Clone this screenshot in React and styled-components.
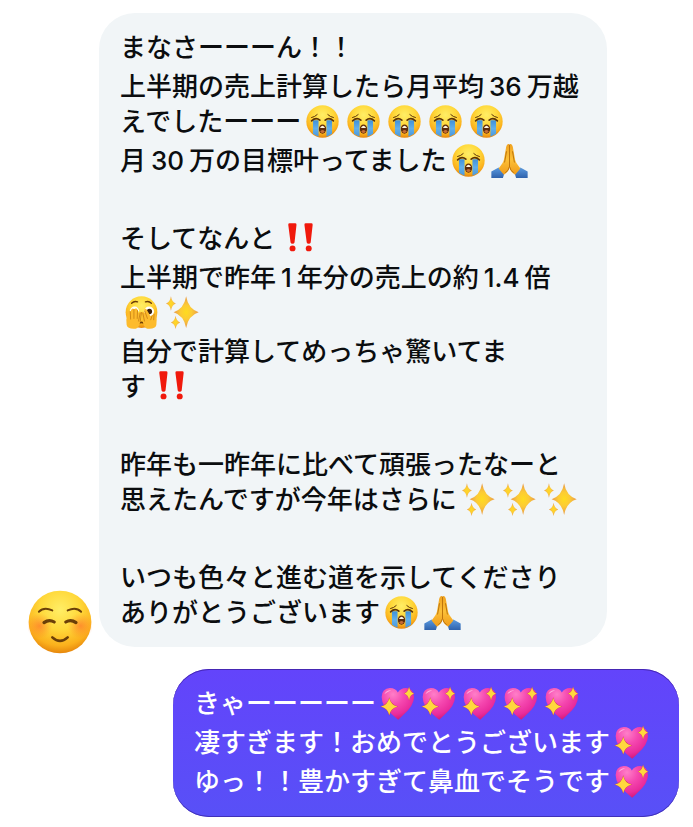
import React from "react";
import styled, { createGlobalStyle } from "styled-components";

// emoji drawings, all on a 100 x 100 grid
const Gradients = () => (
  <HiddenSvg aria-hidden="true">
    <defs>
      <radialGradient id="face" cx="0.5" cy="0.3" r="0.72">
        <stop offset="0" stopColor="#ffee66" />
        <stop offset="0.45" stopColor="#ffd83a" />
        <stop offset="0.8" stopColor="#fbb01c" />
        <stop offset="1" stopColor="#e3800a" />
      </radialGradient>
      <radialGradient id="blush">
        <stop offset="0" stopColor="#ff6a2b" stopOpacity="0.6" />
        <stop offset="1" stopColor="#ff7a2b" stopOpacity="0" />
      </radialGradient>
      <linearGradient id="tear" x1="0" y1="0" x2="0" y2="1">
        <stop offset="0" stopColor="#3f8fd8" />
        <stop offset="0.5" stopColor="#62b0ea" />
        <stop offset="1" stopColor="#4a98dc" />
      </linearGradient>
      <linearGradient id="hand" x1="0" y1="0" x2="0" y2="1">
        <stop offset="0" stopColor="#f0a21f" />
        <stop offset="0.5" stopColor="#fcc038" />
        <stop offset="1" stopColor="#f09c1a" />
      </linearGradient>
      <linearGradient id="sleeve" x1="0" y1="0" x2="0" y2="1">
        <stop offset="0" stopColor="#5b9be0" />
        <stop offset="1" stopColor="#2f62ac" />
      </linearGradient>
      <radialGradient id="star">
        <stop offset="0" stopColor="#ffdc1f" />
        <stop offset="0.45" stopColor="#fccb35" />
        <stop offset="1" stopColor="#e89a4c" />
      </radialGradient>
      <radialGradient id="heart" cx="0.35" cy="0.2" r="0.85">
        <stop offset="0" stopColor="#ff7fc8" />
        <stop offset="0.4" stopColor="#f548b0" />
        <stop offset="0.75" stopColor="#e92c9c" />
        <stop offset="1" stopColor="#cf1670" />
      </radialGradient>
    </defs>
  </HiddenSvg>
);

const Star = ({ x, y, w, h, fill = "url(#star)" }) => (
  <path
    fill={fill}
    d={`M${x} ${y - h}
      Q${x + w * 0.17} ${y - h * 0.2} ${x + w} ${y}
      Q${x + w * 0.17} ${y + h * 0.2} ${x} ${y + h}
      Q${x - w * 0.17} ${y + h * 0.2} ${x - w} ${y}
      Q${x - w * 0.17} ${y - h * 0.2} ${x} ${y - h}Z`}
  />
);

const Sob = () => (
  <>
    <circle cx="50" cy="50" r="49" fill="url(#face)" />
    <path d="M21 46H38V96Q28 92 21 87ZM62 46H79V87Q72 92 62 96Z" fill="url(#tear)" />
    <g fill="none" stroke="#5b3208" strokeLinecap="round">
      <path d="M17 38Q27 36 34 29M83 38Q73 36 66 29" strokeWidth="3" />
      <path d="M17 48Q30 36 42 46M58 46Q70 36 83 48" strokeWidth="5" />
    </g>
    <ellipse cx="50" cy="73" rx="11" ry="14" fill="#5c2b0b" />
    <path d="M43 68Q50 58 57 68V70H43Z" fill="#fff6df" />
    <path d="M43 80Q50 72 57 80Q50 90 43 80Z" fill="#c56b35" />
  </>
);

const Pray = () => (
  <>
    <path d="M-5 83L17 71L34 90L30 103H-5ZM105 83L83 71L66 90L70 103H105Z" fill="url(#sleeve)" />
    <path
      d="M49 0Q42-2 40 8L33 48Q31 57 17 74L33 93Q49 84 50 69ZM51 0Q58-2 60 8L67 48Q69 57 83 74L67 93Q51 84 50 69Z"
      fill="url(#hand)"
    />
    <path d="M50 2V70M41 22L35 56M59 22L65 56M49 70Q48 81 37 87M51 70Q52 81 63 87" fill="none" stroke="#bd740c" strokeWidth="3" />
  </>
);

const Bang = () => (
  <g fill="#f0190c">
    <path d="M25 8Q25 4 29 4H46Q50 4 50 8L44 62Q43 66 38 66T32 62ZM74 8Q74 4 78 4H95Q99 4 99 8L93 62Q92 66 87 66T81 62Z" />
    <circle cx="38" cy="80" r="9" />
    <circle cx="87" cy="80" r="9" />
  </g>
);

const Peek = () => (
  <>
    <circle cx="50" cy="49" r="48" fill="url(#face)" />
    <path d="M20 22Q28 14 38 18M62 18Q72 14 80 22" fill="none" stroke="#6a3c08" strokeWidth="4" strokeLinecap="round" />
    <path d="M14 46Q18 31 30 32Q40 32 43 46Z" fill="#fff" />
    <ellipse cx="73" cy="47" rx="15" ry="15" fill="#fff" />
    <circle cx="74" cy="47" r="8" fill="#3c210b" />
    <path d="M41 84Q50 76 59 84" fill="none" stroke="#6a3c08" strokeWidth="5" />
    <path
      d="M4 72L9 48Q13 42 16 48L20 40Q24 35 27 40L32 38Q36 36 38 42L40 52Q46 44 50 50L46 78Q44 96 32 99Q8 101 5 88Z"
      fill="#fdbb2c"
    />
    <path
      d="M96 72L95 54Q92 48 87 54L82 60L78 62L66 42Q62 36 58 42L60 52Q54 44 50 50L54 78Q56 96 68 99Q92 101 95 88Z"
      fill="#fdbb2c"
    />
    <path
      d="M16 48L17 70M27 41L27 68M38 44L37 68M46 52L41 76M50 50L46 78M60 46L68 68M54 52L59 76M82 60L78 72M88 55L87 72"
      fill="none"
      stroke="#d08a18"
      strokeWidth="3"
      strokeLinecap="round"
    />
  </>
);

const Sparkles = () => (
  <>
    <Star x={61} y={49} w={38} h={48} />
    <Star x={15} y={23} w={15} h={22} />
    <Star x={29} y={80} w={14} h={20} />
  </>
);

const Heart = () => (
  <>
    <path d="M52 99Q47 95 37 86Q2 58 2 30Q3 4 27 3Q45 3 51 17Q59 3 76 3Q99 5 100 30Q100 56 68 84Q58 94 52 99Z" fill="url(#heart)" />
    <path d="M10 22Q17 8 31 10Q20 14 10 22Z" fill="#ffc3e8" opacity="0.8" />
    <Star x={25} y={59} w={27} h={28} fill="#c5434f" />
    <Star x={25} y={59} w={25} h={26} fill="#ffd83d" />
    <Star x={85} y={20} w={16} h={22} fill="#c5434f" />
    <Star x={85} y={20} w={15} h={20} fill="#ffd83d" />
  </>
);

const Smile = () => (
  <>
    <circle cx="50" cy="50" r="49" fill="url(#face)" />
    <circle cx="18" cy="56" r="20" fill="url(#blush)" />
    <circle cx="82" cy="56" r="20" fill="url(#blush)" />
    <g fill="none" stroke="#6b3f08" strokeLinecap="round">
      <path d="M17 34Q25 26 38 32M62 32Q75 26 83 34" strokeWidth="3" />
      <path d="M25 51Q33 45 41 50M59 50Q67 45 75 51" strokeWidth="5" />
      <path d="M38 74Q50 85 62 74" strokeWidth="4" />
    </g>
  </>
);

const emojis = {
  "😭": { label: "大泣き", Art: Sob },
  "🙏": { label: "合掌", Art: Pray },
  "‼": { label: "びっくりマーク", Art: Bang },
  "🫣": { label: "のぞき見", Art: Peek },
  "✨": { label: "キラキラ", Art: Sparkles },
  "💖": { label: "きらめくハート", Art: Heart },
};

const tokens = /(😭|🙏|‼|🫣|✨|💖|[0-9.]+)/u;

// one array per paragraph, one string per line
const received = [
  ["まなさーーーん！！"],
  ["上半期の売上計算したら月平均36万越", "えでしたーーー😭😭😭😭😭"],
  ["月30万の目標叶ってました😭🙏"],
  [""],
  ["そしてなんと‼"],
  ["上半期で昨年1年分の売上の約1.4倍", "🫣✨"],
  ["自分で計算してめっちゃ驚いてま", "す‼"],
  [""],
  ["昨年も一昨年に比べて頑張ったなーと", "思えたんですが今年はさらに✨✨✨"],
  [""],
  ["いつも色々と進む道を示してくださり", "ありがとうございます😭🙏"],
];

const sent = [
  ["きゃーーーーー💖💖💖💖💖"],
  ["凄すぎます！おめでとうございます💖"],
  ["ゆっ！！豊かすぎて鼻血でそうです💖"],
];

const Line = ({ text }) => (
  <TextLine>
    {text.split(tokens).filter(Boolean).map((part, i) => {
      if (emojis[part]) {
        const { label, Art } = emojis[part];
        return (
          <Emoji key={i} viewBox="0 0 100 100" role="img" aria-label={label}>
            <Art />
          </Emoji>
        );
      }
      return /^[0-9.]+$/.test(part) ? <Num key={i}>{part}</Num> : part;
    })}
  </TextLine>
);

const Message = ({ paragraphs }) =>
  paragraphs.map((lines, i) => (
    <Paragraph key={i}>
      {lines.map((text, j) => (
        <Line key={j} text={text} />
      ))}
    </Paragraph>
  ));

export default function App() {
  return (
    <>
      <GlobalStyle />
      <Gradients />
      <Chat>
        <ReceivedRow>
          <Avatar viewBox="0 0 100 100" role="img" aria-label="にっこり">
            <Smile />
          </Avatar>
          <Bubble>
            <Message paragraphs={received} />
          </Bubble>
        </ReceivedRow>
        <SentRow>
          <SentBubble>
            <Message paragraphs={sent} />
          </SentBubble>
        </SentRow>
      </Chat>
    </>
  );
}

//styles
const GlobalStyle = createGlobalStyle`
  body {
    margin: 0;
    background: #fff;
  }
  * {
    box-sizing: border-box;
  }
`;

const HiddenSvg = styled.svg`
  position: absolute;
  width: 0;
  height: 0;
`;

const Chat = styled.main`
  display: flex;
  flex-direction: column;
  gap: 22px;
  padding: 13px 14px 10px 28px;
  font-family: Inter, "Noto Sans CJK JP", sans-serif;
  font-size: 26px;
  font-weight: 500;
  line-height: 35px;
  color: #0b0d0f;
`;

const ReceivedRow = styled.div`
  display: flex;
  align-items: flex-end;
  gap: 7px;
  padding-right: 72px;
`;

const SentRow = styled.div`
  display: flex;
  padding-left: 145px;
`;

const Avatar = styled.svg`
  flex: none;
  width: 64px;
  height: 64px;
  margin-bottom: -7px;
`;

const Bubble = styled.div`
  flex: 1;
  display: flex;
  flex-direction: column;
  gap: 4px;
  padding: 17px 21px;
  border-radius: 36px;
  background: #f1f5f7;
`;

const SentBubble = styled(Bubble)`
  padding-bottom: 18px;
  color: #fff;
  background: linear-gradient(#6344fb, #5850f7);
  box-shadow: inset 0 1px #4526b4, inset 0 -1px #4030b8;
`;

const Paragraph = styled.p`
  margin: 0;
`;

const TextLine = styled.span`
  display: block;
  height: 35px;
  white-space: nowrap;
`;

const Num = styled.span`
  margin: 0 5px;
`;

const Emoji = styled.svg`
  width: 33px;
  height: 33px;
  margin: 1px 3px 0 5px;
  vertical-align: top;
  overflow: visible;
`;
